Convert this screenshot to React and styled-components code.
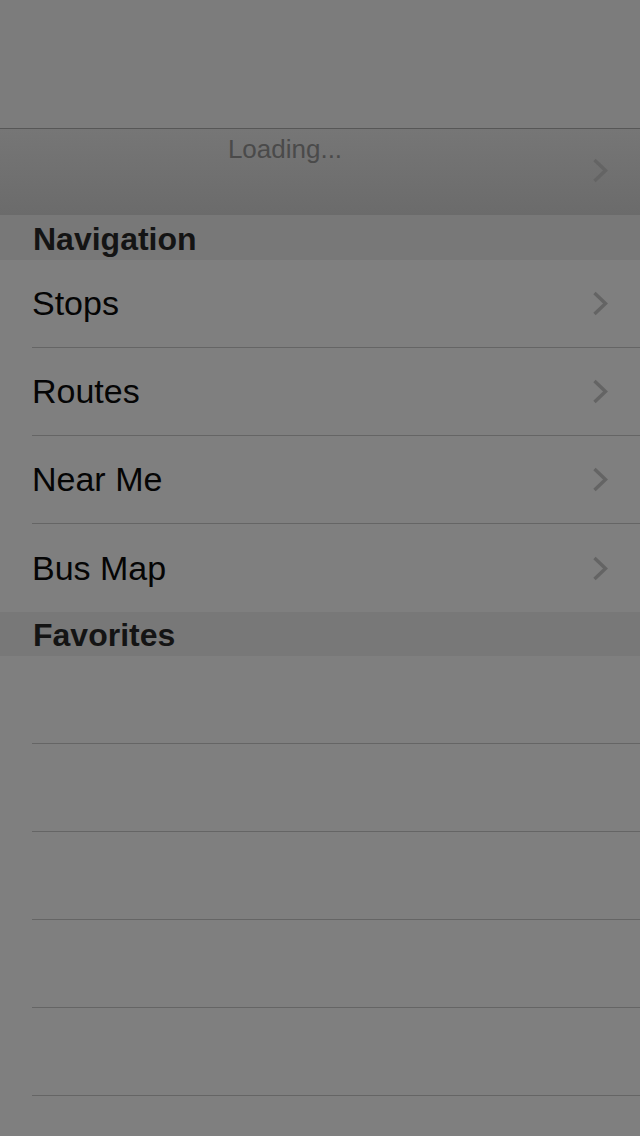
import React from 'react';
import styled, { createGlobalStyle } from 'styled-components';

const GlobalStyle = createGlobalStyle`
  html, body {
    margin: 0;
    padding: 0;
    background: #7f7f7f;
  }
  body {
    font-family: "Liberation Sans", Arial, sans-serif;
  }
`;

const Page = styled.div`
  width: 640px;
  height: 1136px;
  overflow: hidden;
  display: flex;
  flex-direction: column;
  background: #7f7f7f;
`;

const NavBar = styled.div`
  flex: none;
  height: 128px;
  background: #7c7c7c;
  border-bottom: 1px solid #575757;
`;

const LoadingCell = styled.div`
  flex: none;
  height: 86px;
  display: flex;
  align-items: stretch;
  gap: 22px;
  padding-right: 32px;
  background: linear-gradient(to bottom, #767676, #6b6b6b);
`;

const LoadingText = styled.div`
  flex: 1;
  padding-top: 5px;
  text-align: center;
  font-size: 26px;
  line-height: 30px;
  color: #4a4a4a;
`;

const ChevronBox = styled.div`
  flex: none;
  display: flex;
  align-items: center;
  padding-bottom: 4px;
`;

const SectionHeader = styled.div`
  flex: none;
  box-sizing: border-box;
  height: ${props => props.height}px;
  display: flex;
  align-items: center;
  padding-left: 33px;
  padding-top: 3px;
  background: #787878;
  font-size: 32px;
  font-weight: bold;
  color: #141414;
`;

const Row = styled.div`
  flex: none;
  box-sizing: border-box;
  height: 88px;
  margin-left: 32px;
  padding-right: 32px;
  display: flex;
  align-items: center;
  justify-content: space-between;
  border-bottom: ${props => (props.last ? 'none' : '1px solid #656565')};
`;

const RowLabel = styled.span`
  font-size: 34px;
  color: #050505;
`;

const Chevron = () => (
  <svg width="16" height="25" viewBox="0 0 16 25">
    <polyline
      points="2.5,2 13.5,12.5 2.5,23"
      fill="none"
      stroke="#646464"
      strokeWidth="3.4"
    />
  </svg>
);

const navItems = ['Stops', 'Routes', 'Near Me', 'Bus Map'];

const App = () => (
  <Page>
    <GlobalStyle />
    <NavBar />
    <LoadingCell>
      <LoadingText>Loading...</LoadingText>
      <ChevronBox>
        <Chevron />
      </ChevronBox>
    </LoadingCell>
    <SectionHeader height={45}>Navigation</SectionHeader>
    {navItems.map((item, i) => (
      <Row key={item} last={i === navItems.length - 1}>
        <RowLabel>{item}</RowLabel>
        <Chevron />
      </Row>
    ))}
    <SectionHeader height={44}>Favorites</SectionHeader>
    {[0, 1, 2, 3, 4, 5].map(i => (
      <Row key={i} />
    ))}
  </Page>
);

export default App;
